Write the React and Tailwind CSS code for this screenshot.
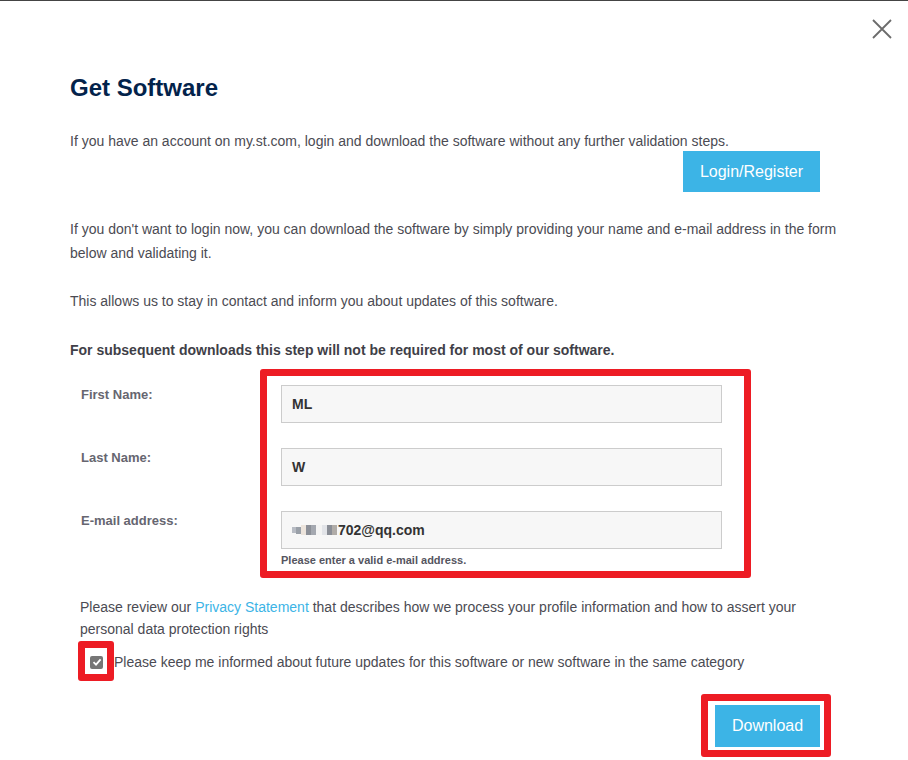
import React from "react";

const font = { fontFamily: '"Liberation Sans", Arial, sans-serif' };

function Field({ value, blurred }) {
  return (
    <div className="h-[38px] w-full border border-[#cccccc] bg-[#f7f7f7] pl-[10px] flex items-center text-[14px] font-bold text-[#333333]">
      {blurred ? (
        <span className="flex items-center">
          <span className="flex items-center mr-[1px]">
            <span className="inline-block w-[4px] h-[6px] bg-[#b8bcc4]" />
            <span className="inline-block w-[5px] h-[7px] bg-[#9aa0a8]" />
            <span className="inline-block w-[5px] h-[10px] bg-[#ece4dc]" />
            <span className="inline-block w-[5px] h-[10px] bg-[#8c9098]" />
            <span className="inline-block w-[5px] h-[10px] bg-[#a4a8b0]" />
            <span className="inline-block w-[6px] h-[10px] bg-[#f4f4f4]" />
            <span className="inline-block w-[5px] h-[10px] bg-[#e2e4e8]" />
            <span className="inline-block w-[5px] h-[10px] bg-[#8a8e96]" />
            <span className="inline-block w-[5px] h-[10px] bg-[#b0aca8]" />
          </span>
          {value}
        </span>
      ) : (
        value
      )}
    </div>
  );
}

export default function App() {
  return (
    <div className="relative w-[908px] h-[760px] bg-white overflow-hidden text-[#4b4b53]" style={font}>
      <div className="h-[1px] w-full bg-[#444444]" />

      <button className="absolute top-[19px] left-[872px] w-[20px] h-[20px]" aria-label="Close">
        <svg width="20" height="20" viewBox="0 0 20 20">
          <path d="M1 1 L19 19 M19 1 L1 19" stroke="#6b6b6b" strokeWidth="1.8" fill="none" />
        </svg>
      </button>

      <div className="pl-[70px] pr-[70px] pt-[73px]">
        <h1 className="text-[24px] leading-[28px] font-bold text-[#03234b]">Get Software</h1>

        <p className="mt-[28px] text-[14px] leading-[22px]">
          If you have an account on my.st.com, login and download the software without any further validation steps.
        </p>

        <div className="-mt-[1px] flex justify-end pr-[18px]">
          <button className="h-[41px] w-[137px] bg-[#3cb4e6] text-white text-[16px]">Login/Register</button>
        </div>

        <p className="mt-[25px] text-[14px] leading-[24px]">
          If you don't want to login now, you can download the software by simply providing your name and e-mail address in the form below and validating it.
        </p>

        <p className="mt-[24px] text-[14px] leading-[24px]">
          This allows us to stay in contact and inform you about updates of this software.
        </p>

        <p className="mt-[25px] text-[14px] leading-[24px] font-bold text-[#3f3f48]">
          For subsequent downloads this step will not be required for most of our software.
        </p>

        <div className="mt-[7px] flex items-start pl-[11px]">
          <div className="w-[179px] pt-[17px] text-[13px] leading-[18px] font-bold text-[#666670]">
            <div className="h-[63px]">First Name:</div>
            <div className="h-[63px]">Last Name:</div>
            <div className="h-[63px]">E-mail address:</div>
          </div>
          <div className="w-[491px] border-[7px] border-[#ed1c24] rounded-[3px] pt-[9px] pl-[14px] pr-[22px] pb-[4px]">
            <Field value="ML" />
            <div className="mt-[25px]">
              <Field value="W" />
            </div>
            <div className="mt-[25px]">
              <Field value="702@qq.com" blurred />
            </div>
            <div className="mt-[5px] text-[11px] leading-[13px] font-bold text-[#555560]">
              Please enter a valid e-mail address.
            </div>
          </div>
        </div>

        <div className="pl-[10px] pr-[10px]">
          <p className="mt-[18px] text-[14px] leading-[22px]">
            Please review our <span className="text-[#3cb4e6]">Privacy Statement</span> that describes how we process your profile information and how to assert your personal data protection rights
          </p>

          <div className="mt-[11px] flex items-center text-[14px] leading-[22px]">
            <span className="relative ml-[10px] mr-[11px] w-[13px] h-[13px] rounded-[2px] bg-[#767676] flex items-center justify-center">
              <svg width="10" height="10" viewBox="0 0 10 10">
                <path d="M1.5 5.2 L4 7.6 L8.6 2.4" stroke="white" strokeWidth="1.8" fill="none" />
              </svg>
              <span className="absolute -left-[12px] -right-[11px] -top-[15px] -bottom-[12px] border-[7px] border-[#ed1c24] rounded-[3px]" />
            </span>
            <span>Please keep me informed about future updates for this software or new software in the same category</span>
          </div>
        </div>

        <div className="mt-[32px] flex justify-end pr-[18px]">
          <span className="relative">
            <button className="h-[42px] w-[105px] bg-[#3cb4e6] text-white text-[16px]">Download</button>
            <span className="absolute -left-[14px] -right-[11px] -top-[11px] -bottom-[10px] border-[7px] border-[#ed1c24] rounded-[3px]" />
          </span>
        </div>
      </div>
    </div>
  );
}
